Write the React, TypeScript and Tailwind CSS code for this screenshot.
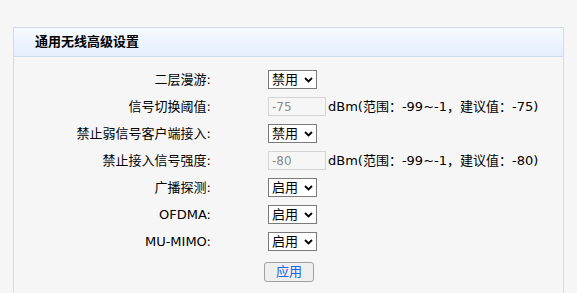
const font = { fontFamily: '"DejaVu Sans", "Noto Sans CJK SC", sans-serif' };

type Row =
  | { label: string; kind: "select"; value: string }
  | { label: string; kind: "input"; value: string; hint: string };

const rows: Row[] = [
  { label: "二层漫游:", kind: "select", value: "禁用" },
  { label: "信号切换阈值:", kind: "input", value: "-75", hint: "dBm(范围：-99~-1，建议值：-75)" },
  { label: "禁止弱信号客户端接入:", kind: "select", value: "禁用" },
  { label: "禁止接入信号强度:", kind: "input", value: "-80", hint: "dBm(范围：-99~-1，建议值：-80)" },
  { label: "广播探测:", kind: "select", value: "启用" },
  { label: "OFDMA:", kind: "select", value: "启用" },
  { label: "MU-MIMO:", kind: "select", value: "启用" },
];

function FakeSelect({ value }: { value: string }) {
  return (
    <div className="flex h-[19px] w-[49px] items-center justify-between border border-[#7a7a7a] bg-white pl-[3px] pr-[3px] text-[13px] text-black">
      <span className="leading-none">{value}</span>
      <svg width="9" height="6" viewBox="0 0 9 6">
        <path d="M1 1l3.5 3.5L8 1" fill="none" stroke="#000" strokeWidth="1.8" />
      </svg>
    </div>
  );
}

export default function App() {
  return (
    <div className="min-h-[293px] w-full bg-[#f6f6f6] pl-[13px] pt-[27px]" style={font}>
      <div className="w-[551px] border border-b-0 border-[#cfdcf0] pb-[12px]">
        <div className="flex h-[29px] items-center border-b border-[#cfdcf0] bg-gradient-to-b from-[#f7faff] to-[#e4eefd] pl-[21px] text-[13px] font-bold text-black">
          通用无线高级设置
        </div>
        <div className="flex flex-col pt-[9px]">
          {rows.map((r) => (
            <div key={r.label} className="flex h-[27px] items-center text-[13px] text-black">
              <div className="w-[197px] text-right">{r.label}</div>
              <div className="ml-[57px] flex items-center">
                {r.kind === "select" ? (
                  <FakeSelect value={r.value} />
                ) : (
                  <>
                    <div className="flex h-[19px] w-[58px] items-center border border-[#d4d4d4] bg-[#f6f6f6] pl-[3px] text-[12px] text-[#8a8a8a]">
                      {r.value}
                    </div>
                    <span className="ml-[2px]">{r.hint}</span>
                  </>
                )}
              </div>
            </div>
          ))}
          <div className="mt-[7px] flex pl-[250px]">
            <button
              type="button"
              className="flex h-[20px] w-[50px] items-center justify-center rounded-[3px] border border-[#a0a0a0] bg-[#efefef] text-[13px] text-[#1a62e8]"
            >
              应用
            </button>
          </div>
        </div>
      </div>
    </div>
  );
}
